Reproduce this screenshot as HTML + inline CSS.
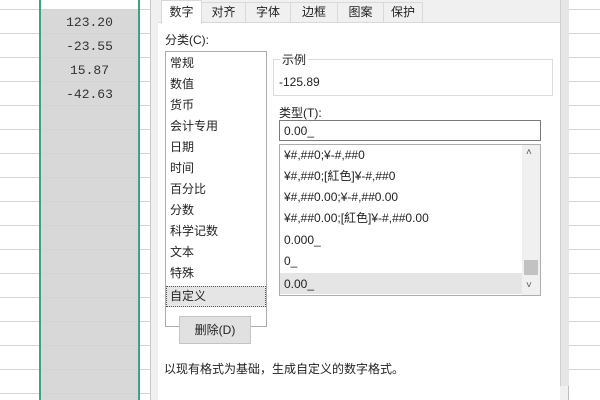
<!DOCTYPE html>
<html><head><meta charset="utf-8"><style>
*{margin:0;padding:0;box-sizing:border-box}
body{width:600px;height:400px;overflow:hidden;background:#fff;position:relative;font-family:"Liberation Sans","Noto Sans CJK SC",sans-serif;font-size:12px;color:#222}
.a{position:absolute}
.row{position:absolute;left:0;width:600px;height:1px;background:#d4d4d4}
.num{position:absolute;left:41px;width:97px;text-align:center;font-family:"Liberation Mono",monospace;font-size:13px;color:#333}
.li{position:absolute;left:170px;font-size:12px;line-height:14px;height:14px}
.ti{position:absolute;left:284px;font-size:12px;line-height:14px;height:14px;white-space:nowrap}
.tab{position:absolute;top:2px;height:20px;border:1px solid #d9d9d9;border-bottom:none;background:#f0f0f0;text-align:center;line-height:19px;font-size:12px}
</style></head><body>
<div class="a" style="left:40px;top:9px;width:99px;height:391px;background:#d8d8d8"></div>
<div class="row" style="top:9px"></div><div class="row" style="top:33px"></div><div class="row" style="top:57px"></div><div class="row" style="top:81px"></div><div class="row" style="top:105px"></div><div class="row" style="top:129px"></div><div class="row" style="top:153px"></div><div class="row" style="top:177px"></div><div class="row" style="top:201px"></div><div class="row" style="top:225px"></div><div class="row" style="top:249px"></div><div class="row" style="top:273px"></div><div class="row" style="top:297px"></div><div class="row" style="top:321px"></div><div class="row" style="top:345px"></div><div class="row" style="top:369px"></div><div class="row" style="top:393px"></div>
<div class="a" style="left:39px;top:0;width:2px;height:400px;background:#3aa57a"></div>
<div class="a" style="left:138px;top:0;width:2px;height:400px;background:#3aa57a"></div>
<div class="num" style="top:15px">123.20</div>
<div class="num" style="top:39px">-23.55</div>
<div class="num" style="top:63px">15.87</div>
<div class="num" style="top:87px">-42.63</div>
<div class="a" style="left:150px;top:0;width:419px;height:400px;background:#f0f0f0;border-left:1px solid #c8c8c8;border-right:1px solid #bdbdbd"></div>
<div class="a" style="left:560px;top:0;width:9px;height:386px;background:#e6e6e6;border-left:1px solid #d0d0d0"></div>
<div class="a" style="left:569px;top:386px;width:31px;height:14px;background:#fff"></div>
<div class="a" style="left:158px;top:22px;width:402px;height:378px;background:#fff;border-top:1px solid #d9d9d9"></div>
<div class="tab" style="left:201px;width:45px">对齐</div>
<div class="tab" style="left:245px;width:46px">字体</div>
<div class="tab" style="left:290px;width:48px">边框</div>
<div class="tab" style="left:337px;width:47px">图案</div>
<div class="tab" style="left:383px;width:40px">保护</div>
<div class="tab" style="left:161px;top:0;width:41px;height:24px;background:#fff;line-height:23px">数字</div>
<div class="a" style="left:165px;top:31px">分类(C):</div>
<div class="a" style="left:165px;top:51px;width:102px;height:276px;border:1px solid #adadad"></div>
<div class="li" style="top:56px">常规</div><div class="li" style="top:77px">数值</div><div class="li" style="top:98px">货币</div><div class="li" style="top:119px">会计专用</div><div class="li" style="top:140px">日期</div><div class="li" style="top:161px">时间</div><div class="li" style="top:182px">百分比</div><div class="li" style="top:203px">分数</div><div class="li" style="top:224px">科学记数</div><div class="li" style="top:245px">文本</div><div class="li" style="top:266px">特殊</div>
<div class="a" style="left:166px;top:286px;width:100px;height:21px;background:#e5e5e5;border:1px dotted #555"></div>
<div class="li" style="top:289px">自定义</div>
<div class="a" style="left:273px;top:59px;width:280px;height:37px;border:1px solid #dcdcdc"></div>
<div class="a" style="left:280px;top:51px;background:#fff;padding:0 2px">示例</div>
<div class="a" style="left:279px;top:75px">-125.89</div>
<div class="a" style="left:279px;top:104px">类型(T):</div>
<div class="a" style="left:279px;top:120px;width:262px;height:21px;border:1px solid #7a7a7a;padding:3px 4px">0.00_</div>
<div class="a" style="left:279px;top:144px;width:262px;height:152px;border:1px solid #adadad"></div>
<div class="a" style="left:280px;top:273px;width:242px;height:21px;background:#e5e5e5"></div>
<div class="a" style="left:522px;top:145px;width:18px;height:150px;background:#f0f0f0"></div>
<div class="a" style="left:524px;top:260px;width:14px;height:15px;background:#c2c2c2"></div>
<div class="a" style="left:526px;top:147px;font-size:10px;color:#555">˄</div>
<div class="a" style="left:526px;top:280px;font-size:10px;color:#555">˅</div>
<div class="ti" style="top:148px">&#165;#,##0;&#165;-#,##0</div>
<div class="ti" style="top:169px">&#165;#,##0;[紅色]&#165;-#,##0</div>
<div class="ti" style="top:190px">&#165;#,##0.00;&#165;-#,##0.00</div>
<div class="ti" style="top:211px">&#165;#,##0.00;[紅色]&#165;-#,##0.00</div>
<div class="ti" style="top:233px">0.000_</div>
<div class="ti" style="top:254px">0_</div>
<div class="ti" style="top:277px">0.00_</div>
<div class="a" style="left:179px;top:316px;width:72px;height:28px;background:#e1e1e1;border:1px solid #c4c4c4;text-align:center;line-height:26px">删除(D)</div>
<div class="a" style="left:164px;top:360px">以现有格式为基础，生成自定义的数字格式。</div>
</body></html>
